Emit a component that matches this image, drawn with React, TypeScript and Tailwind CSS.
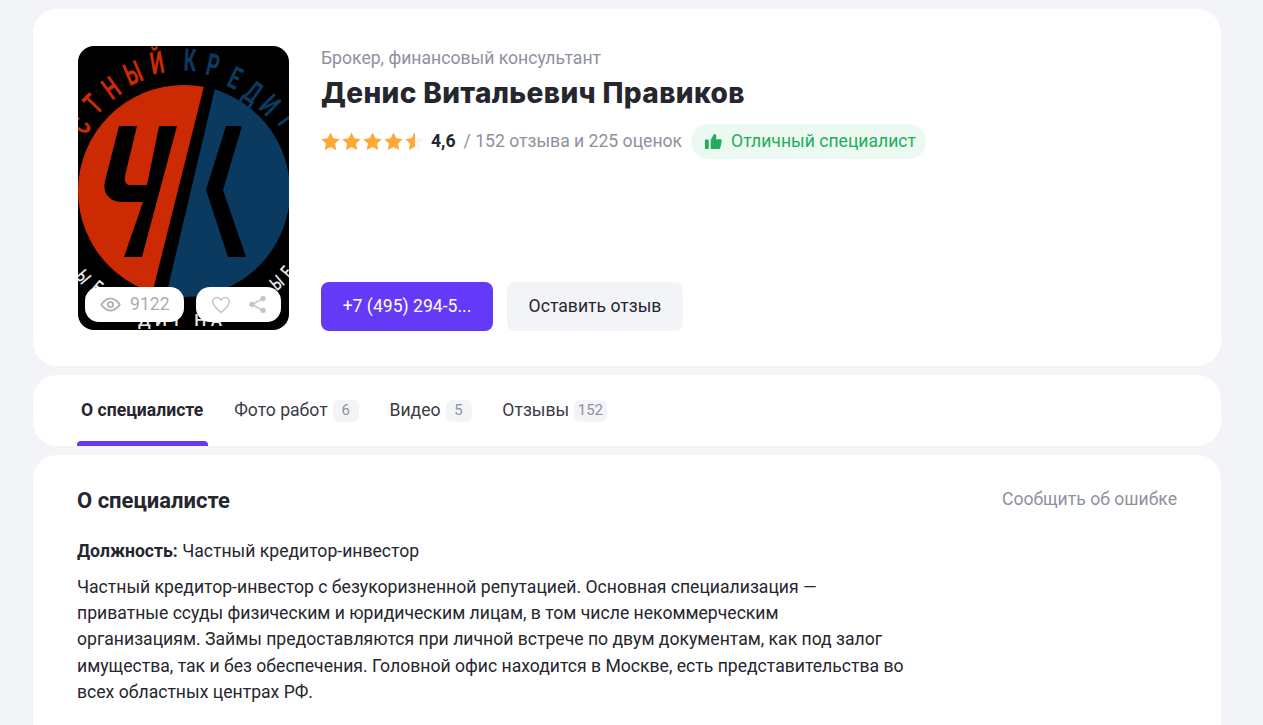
import React from 'react';

const Star = ({ half = false }: { half?: boolean }) => (
  <svg viewBox="0 0 24 24" className="w-[21px] h-[21px]">
    <defs>
      <linearGradient id="halfStar">
        <stop offset="55%" stopColor="#ffa834" />
        <stop offset="55%" stopColor="#f3f4f8" />
      </linearGradient>
    </defs>
    <path
      d="M12 1.6l3.200 6.700 7.300 1-5.300 5.100 1.300 7.300L12 18.300l-6.500 3.400 1.300-7.300L1.500 9.300l7.300-1z"
      fill={half ? 'url(#halfStar)' : '#ffa834'}
    />
  </svg>
);

// letters of the round logo text: char, x, y, rotation
const topLetters: [string, number, number, number, string][] = [
  ['С', 2, 79, -58, '#cb2a02'],
  ['Т', 15, 58, -46, '#cb2a02'],
  ['Н', 33, 42, -36, '#cb2a02'],
  ['Ы', 55, 27, -23, '#cb2a02'],
  ['Й', 79, 17, -10, '#cb2a02'],
  ['К', 112, 14, 3, '#0b3a60'],
  ['Р', 135, 19, 13, '#0b3a60'],
  ['Е', 157, 32, 25, '#0b3a60'],
  ['Д', 175, 46, 35, '#0b3a60'],
  ['И', 192, 59, 45, '#0b3a60'],
  ['Т', 209, 73, 55, '#0b3a60'],
];

const bottomLetters: [string, number, number, number][] = [
  ['Ы', 5, 231, 50],
  ['Е', 19, 241, 40],
  ['Ы', 199, 237, -40],
  ['Е', 209, 226, -50],
];

const Logo = () => (
  <svg viewBox="0 0 211 284" className="w-full h-full block" style={{ fontFamily: 'Roboto, sans-serif' }}>
    <rect width="211" height="284" fill="#000" />
    <defs>
      <clipPath id="leftHalf"><path d="M0 0H136L65 284H0z" /></clipPath>
      <clipPath id="rightHalf"><path d="M147 0H211V284H80z" /></clipPath>
    </defs>
    <circle cx="106" cy="145" r="106" fill="#cb2a02" clipPath="url(#leftHalf)" />
    <circle cx="106" cy="145" r="106" fill="#0b3a60" clipPath="url(#rightHalf)" />
    <path
      d="M41 80H59L47 130C46 135 48 139 52 139H69L81 80H99L64 211H46L65 156H45C32 156 24 148 27 135z"
      fill="#000"
    />
    <path d="M148 80H164L145 144L168 211H150L128 144z" fill="#000" />
    {topLetters.map(([ch, x, y, r, color], i) => (
      <text
        key={i}
        transform={`translate(${x} ${y}) rotate(${r}) scale(0.62 1)`}
        textAnchor="middle"
        dominantBaseline="central"
        fontSize="31"
        fontWeight="700"
        fill={color}
      >
        {ch}
      </text>
    ))}
    {bottomLetters.map(([ch, x, y, r], i) => (
      <text
        key={i}
        transform={`translate(${x} ${y}) rotate(${r}) scale(0.7 1)`}
        textAnchor="middle"
        dominantBaseline="central"
        fontSize="19"
        fontWeight="500"
        fill="#e8e8e8"
      >
        {ch}
      </text>
    ))}
    <text x="60" y="280" fontSize="17" fontWeight="500" textLength="84" fill="#e8e8e8">ДИТ НА</text>
  </svg>
);

const tabs = [
  { label: 'Фото работ', count: '6' },
  { label: 'Видео', count: '5' },
  { label: 'Отзывы', count: '152' },
];

export default function App() {
  return (
    <div className="h-screen overflow-hidden bg-[#f3f4f8] pl-[33px] pr-[42px] pt-[9px] flex flex-col gap-[9px] font-['Roboto',sans-serif] text-[17.6px] leading-[26.4px] text-[#25262e]">
      {/* Header card */}
      <div className="bg-white rounded-3xl pl-[45px] pt-[37px] pb-[36px] flex gap-8 shrink-0">
        <div className="relative w-[211px] h-[284px] rounded-2xl overflow-hidden shrink-0">
          <Logo />
          <div className="absolute left-[7px] bottom-[8px] flex gap-[12px]">
            <div className="w-[99px] h-[35px] bg-white rounded-[14px] flex items-center pl-[15px] gap-[9px] text-[#a9abb8] text-[17.6px]">
              <svg viewBox="0 0 24 24" className="w-[21px] h-[21px]" fill="none" stroke="#b1b3bf" strokeWidth="2.200">
                <path d="M1.500 12S5.500 5 12 5s10.500 7 10.500 7-4 7-10.500 7S1.500 12 1.500 12z" />
                <circle cx="12" cy="12" r="3" />
              </svg>
              9122
            </div>
            <div className="w-[85px] h-[35px] bg-white rounded-[14px] flex items-center pl-[15px] gap-[17px]">
              <svg viewBox="0 0 24 24" className="w-[20px] h-[20px]" fill="none" stroke="#c3c5ce" strokeWidth="1.800">
                <path d="M12 21C6 16 2 12.500 2 8.200 2 5.200 4.300 3 7 3c2 0 3.800 1 5 3 1.200-2 3-3 5-3 2.700 0 5 2.200 5 5.200C22 12.500 18 16 12 21z" />
              </svg>
              <svg viewBox="0 0 24 24" className="w-[19px] h-[19px]" fill="#c3c5ce" stroke="#c3c5ce">
                <circle cx="19" cy="4.500" r="3" />
                <circle cx="5" cy="12" r="3" />
                <circle cx="19" cy="19.500" r="3" />
                <path d="M19 4.500L5 12l14 7.500" fill="none" strokeWidth="1.800" />
              </svg>
            </div>
          </div>
        </div>

        <div className="flex flex-col -mb-[1px]">
          <div className="text-[#8f909e] -mt-[1px]">Брокер, финансовый консультант</div>
          <h1 className="mt-[6px] text-[28px] leading-8 font-extrabold tracking-[0.36px] font-['Inter',sans-serif] text-[#25262e]">
            Денис Витальевич Правиков
          </h1>
          <div className="mt-[15px] flex items-center h-[35px]">
            <div className="flex -ml-[1px] mb-[1px]">
              <Star /><Star /><Star /><Star /><Star half />
            </div>
            <span className="ml-[6px] mb-[2px] font-bold">4,6</span>
            <span className="ml-[8px] mb-[2px] text-[#8f909e]">/ 152 отзыва и 225 оценок</span>
            <div className="ml-[9px] h-[35px] rounded-[18px] bg-[#ecf9f0] flex items-center pl-[13px] pr-[10px] pb-[1px] gap-[8px] text-[#22ad5c]">
              <svg viewBox="0 0 20 20" className="w-[19px] h-[19px]" fill="#22ad5c">
                <rect x="1" y="8" width="4" height="10" rx="1" />
                <path d="M7 8.500L10.500 2c1.800 0 2.800 1.200 2.500 3L12.500 7.500H17c1.200 0 2 1 1.700 2.200l-1.500 6.800c-.2 1-1 1.500-2 1.500H8.500C7.700 18 7 17.300 7 16.500z" />
              </svg>
              Отличный специалист
            </div>
          </div>
          <div className="mt-auto flex gap-[14px]">
            <button className="w-[172px] h-[49px] rounded-lg bg-[#6439f8] text-white">+7 (495) 294-5...</button>
            <button className="w-[176px] h-[49px] rounded-lg bg-[#f3f4f8] text-[#25262e]">Оставить отзыв</button>
          </div>
        </div>
      </div>

      {/* Tabs */}
      <div className="bg-white rounded-3xl h-[71px] pl-[44px] flex gap-[22px] shrink-0">
        <div className="relative h-full flex items-center pl-[4px] pr-[5px] font-bold">
          О специалисте
          <div className="absolute left-0 right-0 bottom-0 h-[5px] rounded-t bg-[#6439f8]" />
        </div>
        {tabs.map((tab) => (
          <div key={tab.label} className="flex items-center gap-[5px] pl-[4px] pr-[4.800px] text-[#3a3b45]">
            {tab.label}
            <span className="min-w-[26px] h-[22px] px-[3.500px] rounded-md bg-[#f3f4f8] flex items-center justify-center text-[15px] text-[#8f909e]">
              {tab.count}
            </span>
          </div>
        ))}
      </div>

      {/* About */}
      <div className="bg-white rounded-t-3xl px-[44px] pt-[32px] flex-1">
        <div className="flex justify-between items-start">
          <h2 className="text-[22px] leading-7 font-bold">О специалисте</h2>
          <a className="text-[#8f909e] -mt-[1px]">Сообщить об ошибке</a>
        </div>
        <p className="mt-[23px] text-[#25262e]">
          <b>Должность:</b> Частный кредитор-инвестор
        </p>
        <p className="mt-[9.200px] w-[827px] text-[#25262e]">
          Частный кредитор-инвестор с безукоризненной репутацией. Основная специализация — приватные ссуды физическим и юридическим лицам, в том числе некоммерческим организациям. Займы предоставляются при личной встрече по двум документам, как под залог имущества, так и без обеспечения. Головной офис находится в Москве, есть представительства во всех областных центрах РФ.
        </p>
      </div>
    </div>
  );
}
